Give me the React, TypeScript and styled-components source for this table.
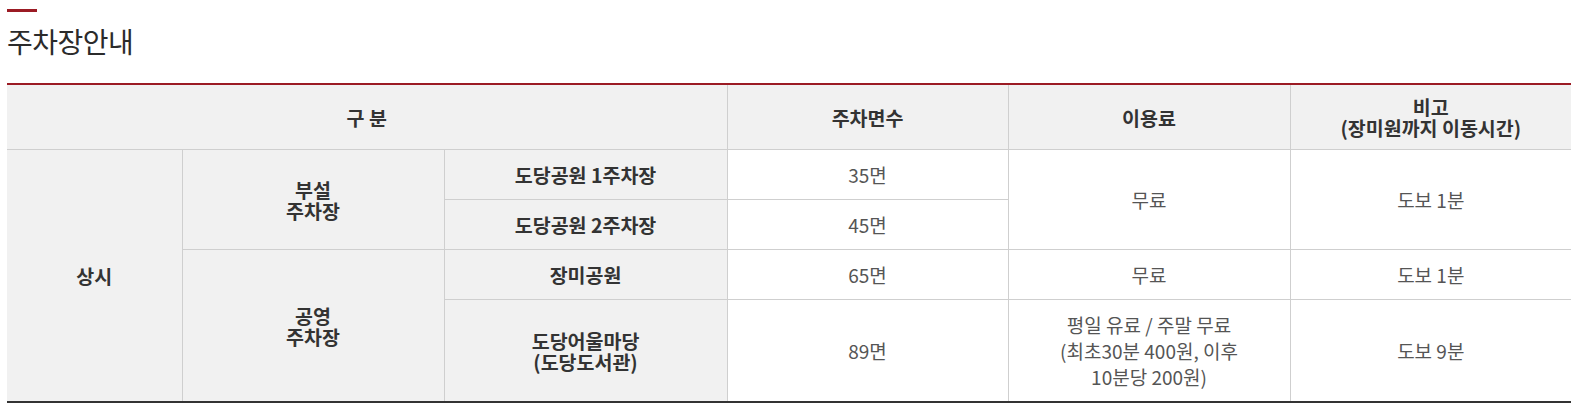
import React from 'react';
import styled, { createGlobalStyle } from 'styled-components';

const GlobalStyle = createGlobalStyle`
  html, body {
    margin: 0;
    padding: 0;
    background: #ffffff;
  }
  body {
    font-family: 'Noto Sans CJK KR', 'Noto Sans', sans-serif;
    color: #333333;
  }
`;

const POINT_RED = '#9b1b24';
const LINE = '#cfcfcf';
const CELL_GRAY = '#f1f1f1';

const Wrap = styled.section`
  padding: 9px 11px 0 7px;
`;

const TitleBar = styled.span`
  display: block;
  width: 30px;
  height: 3px;
  background: ${POINT_RED};
`;

const Title = styled.h2`
  margin: 10px 0 0;
  font-size: 28px;
  font-weight: 400;
  line-height: 38px;
  color: #2b2b2b;
  letter-spacing: -0.5px;
`;

const Table = styled.table`
  width: 100%;
  margin-top: 23px;
  border-collapse: collapse;
  table-layout: fixed;
  border-top: 2px solid ${POINT_RED};
  border-bottom: 2px solid #333333;
`;

const HeadCell = styled.th`
  background: ${CELL_GRAY};
  border: 1px solid ${LINE};
  border-top: 0;
  padding: 11px 10px;
  font-size: 19.5px;
  font-weight: 700;
  line-height: 21px;
  color: #333333;
  text-align: center;
  &:first-child { border-left: 0; }
  &:last-child { border-right: 0; }
`;

const LabelCell = styled.th`
  background: ${CELL_GRAY};
  border: 1px solid ${LINE};
  padding: 11.5px 10px;
  font-size: 19.5px;
  font-weight: 700;
  line-height: 21px;
  color: #333333;
  text-align: center;
  vertical-align: middle;
  &:first-child { border-left: 0; }
`;

const DataCell = styled.td`
  background: #ffffff;
  border: 1px solid ${LINE};
  padding: 11.5px 10px;
  font-size: 19px;
  font-weight: 400;
  line-height: 26px;
  color: #555555;
  text-align: center;
  vertical-align: middle;
  &:last-child { border-right: 0; }
`;

const Lines = ({ items }: { items: string[] }) => (
  <>
    {items.map((t, i) => (
      <React.Fragment key={i}>
        {i > 0 && <br />}
        {t}
      </React.Fragment>
    ))}
  </>
);

export default function App() {
  return (
    <>
      <GlobalStyle />
      <Wrap>
        <TitleBar />
        <Title>주차장안내</Title>
        <Table>
          <colgroup>
            <col style={{ width: 175 }} />
            <col style={{ width: 262 }} />
            <col style={{ width: 283 }} />
            <col style={{ width: 281 }} />
            <col style={{ width: 282 }} />
            <col style={{ width: 281 }} />
          </colgroup>
          <thead>
            <tr>
              <HeadCell colSpan={3}>구 분</HeadCell>
              <HeadCell>주차면수</HeadCell>
              <HeadCell>이용료</HeadCell>
              <HeadCell>
                <Lines items={['비고', '(장미원까지 이동시간)']} />
              </HeadCell>
            </tr>
          </thead>
          <tbody>
            <tr>
              <LabelCell rowSpan={4}>상시</LabelCell>
              <LabelCell rowSpan={2}>
                <Lines items={['부설', '주차장']} />
              </LabelCell>
              <LabelCell>도당공원 1주차장</LabelCell>
              <DataCell>35면</DataCell>
              <DataCell rowSpan={2}>무료</DataCell>
              <DataCell rowSpan={2}>도보 1분</DataCell>
            </tr>
            <tr>
              <LabelCell>도당공원 2주차장</LabelCell>
              <DataCell>45면</DataCell>
            </tr>
            <tr>
              <LabelCell rowSpan={2}>
                <Lines items={['공영', '주차장']} />
              </LabelCell>
              <LabelCell>장미공원</LabelCell>
              <DataCell>65면</DataCell>
              <DataCell>무료</DataCell>
              <DataCell>도보 1분</DataCell>
            </tr>
            <tr>
              <LabelCell>
                <Lines items={['도당어울마당', '(도당도서관)']} />
              </LabelCell>
              <DataCell>89면</DataCell>
              <DataCell>
                <Lines
                  items={[
                    '평일 유료 / 주말 무료',
                    '(최초30분 400원, 이후',
                    '10분당 200원)',
                  ]}
                />
              </DataCell>
              <DataCell>도보 9분</DataCell>
            </tr>
          </tbody>
        </Table>
      </Wrap>
    </>
  );
}
